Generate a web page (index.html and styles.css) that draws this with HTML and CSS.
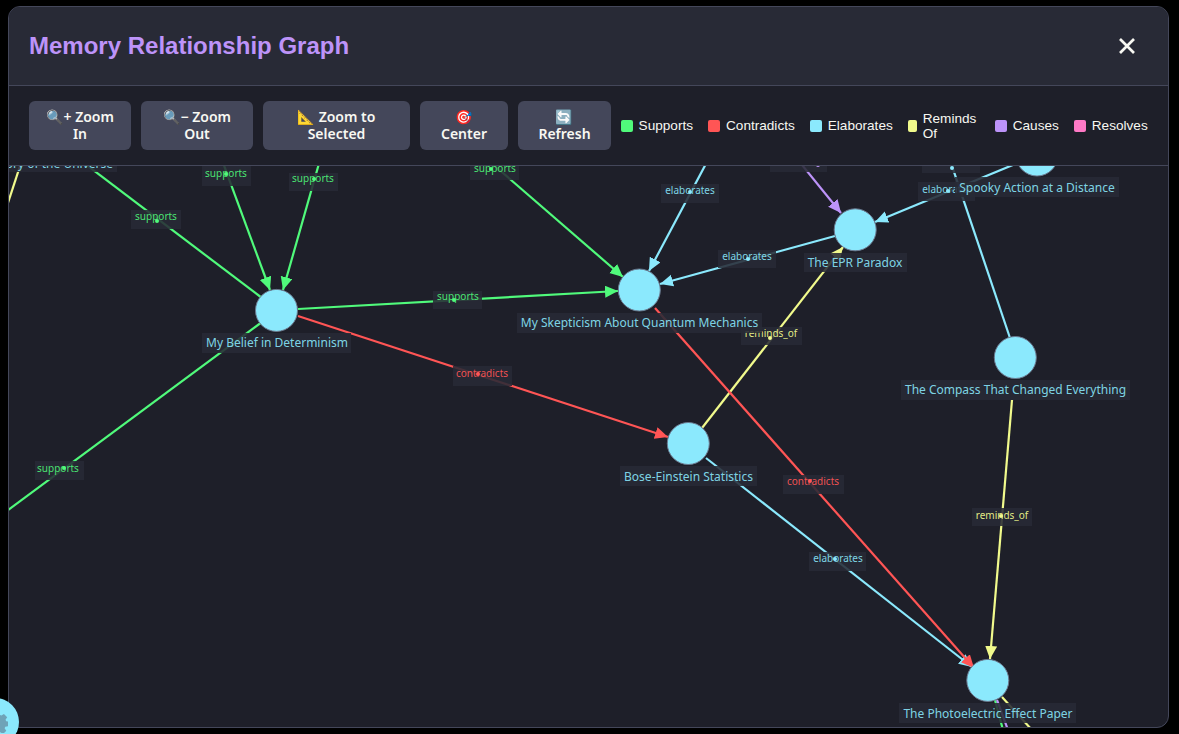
FILE: index.html
```html
<!DOCTYPE html>
<html lang="en">
<head>
<meta charset="utf-8">
<title>Memory Relationship Graph</title>
<link rel="stylesheet" href="styles.css">
</head>
<body>
<div class="modal">
  <header class="head">
    <h1 class="title">Memory Relationship Graph</h1>
    <button class="close" aria-label="Close"><svg class="close-i" viewBox="0 0 16 16"><path d="M1 1L15 15M15 1L1 15"/></svg></button>
  </header>
  <div class="toolbar">
    <button class="btn w1">🔍+ Zoom In</button>
    <button class="btn w2">🔍− Zoom Out</button>
    <button class="btn w3">📐 Zoom to Selected</button>
    <button class="btn w4">🎯 Center</button>
    <button class="btn w5">🔄 Refresh</button>
    <ul class="legend">
      <li class="item"><span class="sw c-sup"></span>Supports</li>
      <li class="item"><span class="sw c-con"></span>Contradicts</li>
      <li class="item"><span class="sw c-ela"></span>Elaborates</li>
      <li class="item rem"><span class="sw c-rem"></span><span class="rem-t">Reminds Of</span></li>
      <li class="item"><span class="sw c-cau"></span>Causes</li>
      <li class="item"><span class="sw c-res"></span>Resolves</li>
    </ul>
  </div>
  <svg class="graph" viewBox="9 166 1159 561" preserveAspectRatio="xMinYMin slice">
    <defs>
      <marker id="a-sup" markerUnits="userSpaceOnUse" markerWidth="15" markerHeight="13" refX="13" refY="6" orient="auto"><path class="f-sup" d="M0 0L13 6L0 12Z"/></marker>
      <marker id="a-con" markerUnits="userSpaceOnUse" markerWidth="15" markerHeight="13" refX="13" refY="6" orient="auto"><path class="f-con" d="M0 0L13 6L0 12Z"/></marker>
      <marker id="a-ela" markerUnits="userSpaceOnUse" markerWidth="15" markerHeight="13" refX="13" refY="6" orient="auto"><path class="f-ela" d="M0 0L13 6L0 12Z"/></marker>
      <marker id="a-rem" markerUnits="userSpaceOnUse" markerWidth="15" markerHeight="13" refX="13" refY="6" orient="auto"><path class="f-rem" d="M0 0L13 6L0 12Z"/></marker>
      <marker id="a-cau" markerUnits="userSpaceOnUse" markerWidth="15" markerHeight="13" refX="13" refY="6" orient="auto"><path class="f-cau" d="M0 0L13 6L0 12Z"/></marker>
    </defs>

    <g class="edges">
      <line class="s-rem" x1="22" y1="160" x2="5" y2="212"/>
      <line class="s-sup" x1="80" y1="160" x2="262" y2="298"/>
      <line class="s-sup" x1="222" y1="160" x2="270" y2="290" marker-end="url(#a-sup)"/>
      <line class="s-sup" x1="320" y1="160" x2="283" y2="290" marker-end="url(#a-sup)"/>
      <line class="s-sup" x1="0" y1="516" x2="262" y2="322"/>
      <line class="s-sup" x1="298" y1="309" x2="618" y2="291" marker-end="url(#a-sup)"/>
      <line class="s-con" x1="298" y1="316" x2="668" y2="437" marker-end="url(#a-con)"/>
      <line class="s-sup" x1="488" y1="160" x2="623" y2="277" marker-end="url(#a-sup)"/>
      <line class="s-ela" x1="708" y1="160" x2="649" y2="271" marker-end="url(#a-ela)"/>
      <line class="s-ela" x1="835" y1="236" x2="660" y2="284" marker-end="url(#a-ela)"/>
      <line class="s-cau" x1="798" y1="160" x2="841" y2="213" marker-end="url(#a-cau)"/>
      <line class="s-ela" x1="1037" y1="155" x2="875" y2="222" marker-end="url(#a-ela)"/>
      <line class="s-ela" x1="950" y1="160" x2="1010" y2="338"/>
      <line class="s-rem" x1="702" y1="428" x2="843" y2="247" marker-end="url(#a-rem)"/>
      <line class="s-ela" x1="706" y1="458" x2="972" y2="667" marker-end="url(#a-ela)"/>
      <line class="s-con" x1="655" y1="308" x2="974" y2="668" marker-end="url(#a-con)"/>
      <line class="s-rem" x1="1012" y1="400" x2="990" y2="659" marker-end="url(#a-rem)"/>
      <line class="s-sup" x1="995" y1="700" x2="1003" y2="730"/>
      <line class="s-cau" x1="997" y1="700" x2="1008" y2="730"/>
      <line class="s-rem" x1="1002" y1="697" x2="1032" y2="730"/>
    </g>

    <g class="elabels">
      <rect x="131" y="210" width="50" height="19"/><text class="t-sup" x="156" y="220">supports</text><circle class="f-sup" cx="157" cy="221" r="2"/>
      <rect x="202" y="165" width="49" height="21"/><text class="t-sup" x="226" y="177">supports</text><circle class="f-sup" cx="226" cy="174" r="2"/>
      <rect x="289" y="173" width="49" height="18"/><text class="t-sup" x="313" y="182">supports</text><circle class="f-sup" cx="314" cy="179" r="2"/>
      <rect x="35" y="461" width="49" height="19"/><text class="t-sup" x="58" y="472">supports</text><circle class="f-sup" cx="64" cy="468" r="2"/>
      <rect x="433" y="291" width="49" height="18"/><text class="t-sup" x="458" y="300">supports</text><circle class="f-sup" cx="454" cy="300" r="2"/>
      <rect x="453" y="366" width="59" height="20"/><text class="t-con" x="482" y="377">contradicts</text><circle class="f-con" cx="478" cy="374" r="2"/>
      <rect x="470" y="161" width="49" height="19"/><text class="t-sup" x="495" y="172">supports</text><circle class="f-sup" cx="491" cy="169" r="2"/>
      <rect x="661" y="184" width="58" height="19"/><text class="t-ela" x="690" y="194">elaborates</text><circle class="f-ela" cx="690" cy="192" r="2"/>
      <rect x="718" y="250" width="58" height="18"/><text class="t-ela" x="747" y="260">elaborates</text><circle class="f-ela" cx="748" cy="259" r="2"/>
      <rect x="770" y="150" width="57" height="22"/><circle class="f-cau" cx="818" cy="165" r="2"/>
      <rect x="922" y="150" width="58" height="23"/><circle class="f-ela" cx="952" cy="168" r="2"/>
      <rect x="918" y="182" width="57" height="19"/><text class="t-ela" x="947" y="193">elaborates</text><circle class="f-ela" cx="948" cy="191" r="2"/>
      <rect x="741" y="327" width="61" height="18"/><text class="t-rem" x="771" y="337">reminds_of</text><circle class="f-rem" cx="770" cy="338" r="2"/>
      <rect x="783" y="475" width="61" height="19"/><text class="t-con" x="813" y="485">contradicts</text><circle class="f-con" cx="810" cy="481" r="2"/>
      <rect x="809" y="552" width="57" height="19"/><text class="t-ela" x="838" y="562">elaborates</text><circle class="f-ela" cx="835" cy="559" r="2"/>
      <rect x="972" y="508" width="60" height="18"/><text class="t-rem" x="1002" y="519">reminds_of</text><circle class="f-rem" cx="1001" cy="516" r="2"/>
    </g>

    <g class="nodes">
      <circle cx="276.5" cy="310.4" r="21"/>
      <circle cx="639.3" cy="290" r="21"/>
      <circle cx="855.2" cy="229.8" r="21"/>
      <circle cx="1037" cy="155" r="21"/>
      <circle cx="1015.3" cy="357.5" r="21"/>
      <circle cx="688.3" cy="443.5" r="21"/>
      <circle cx="987.8" cy="680.4" r="21"/>
    </g>

    <g class="nlabels">
      <rect x="0" y="150" width="117" height="22"/><text x="49" y="168">Theory of the Universe</text>
      <rect x="202" y="333" width="149" height="20"/><text x="277" y="347">My Belief in Determinism</text>
      <rect x="517" y="313" width="245" height="20"/><text x="639.5" y="327">My Skepticism About Quantum Mechanics</text>
      <rect x="804" y="253" width="103" height="19"/><text x="855" y="267">The EPR Paradox</text>
      <rect x="955" y="177" width="164" height="20"/><text x="1037" y="192">Spooky Action at a Distance</text>
      <rect x="901" y="380" width="229" height="20"/><text x="1015.5" y="394">The Compass That Changed Everything</text>
      <rect x="620" y="466" width="137" height="20"/><text x="688.5" y="481">Bose-Einstein Statistics</text>
      <rect x="899" y="703" width="177" height="20"/><text x="988" y="718">The Photoelectric Effect Paper</text>
    </g>
  </svg>
</div>
<button class="fab" aria-label="Settings">
  <svg class="fab-i" viewBox="-12 -12 24 24"><path d="M-2.5-11h5l.6 3.2 1.7.8 2.8-1.8 3.5 3.5L9.3-2.5l.7 1.6 2 .4v5l-3 .6-.7 1.7 1.8 2.8-3.5 3.5-2.8-1.8-1.6.7-.6 3h-5l-.6-3-1.6-.7-2.8 1.8-3.5-3.5 1.8-2.8-.7-1.7-3-.6v-5l3-.6.7-1.6-1.8-2.8 3.5-3.5 2.8 1.8 1.7-.8z"/></svg>
</button>
</body>
</html>
```

FILE: styles.css
```css
* { box-sizing: border-box; }
html, body { height: 100%; }
body {
  margin: 0;
  padding: 6px 10px 6px 8px;
  background: #000;
  overflow: hidden;
}
.modal {
  height: 722px;
  display: flex;
  flex-direction: column;
  background: #1e1f29;
  border: 1px solid #44475a;
  border-radius: 12px;
  overflow: hidden;
}
.head {
  flex: 0 0 79px;
  display: flex;
  align-items: center;
  justify-content: space-between;
  padding: 0 26px 0 20px;
  background: #282a36;
  border-bottom: 1px solid #44475a;
}
.title {
  margin: 0;
  font: 700 24px "Liberation Sans", Arial, sans-serif;
  color: #bd93f9;
}
.close {
  display: flex;
  align-items: center;
  justify-content: center;
  width: 30px;
  height: 30px;
  padding: 0;
  border: 0;
  background: none;
}
.close-i { width: 16px; height: 16px; }
.close-i path { stroke: #f8f8f2; stroke-width: 2.7; fill: none; }
.toolbar {
  flex: 0 0 80px;
  display: flex;
  align-items: center;
  gap: 10px;
  padding: 0 20px;
  border-bottom: 1px solid #44475a;
}
.btn {
  flex: none;
  height: 49px;
  padding: 0 16px 2px;
  border: 0;
  border-radius: 6px;
  background: #44475a;
  color: #f8f8f2;
  font: 600 14px/17px "Noto Sans", "Noto Color Emoji", sans-serif;
  text-align: center;
}
.w1 { width: 102px; }
.w2 { width: 112px; }
.w3 { width: 147px; }
.w4 { width: 88px; }
.w5 { width: 93px; }
.legend {
  display: flex;
  align-items: center;
  gap: 15.4px;
  margin: 0;
  padding: 0;
  list-style: none;
  font: 400 13.6px/15px "Liberation Sans", Arial, sans-serif;
  color: #f8f8f2;
}
.item { display: flex; align-items: center; gap: 5.6px; white-space: nowrap; }
.rem-t { white-space: normal; width: 57px; }
.sw { flex: none; width: 12px; height: 12px; border-radius: 2px; }
.rem .sw { width: 9px; }
.c-sup { background: #50fa7b; }
.c-con { background: #ff5555; }
.c-ela { background: #8be9fd; }
.c-rem { background: #f1fa8c; }
.c-cau { background: #bd93f9; }
.c-res { background: #ff79c6; }

.graph { flex: 1; display: block; width: 100%; min-height: 0; }
.edges line { stroke-width: 2.2; fill: none; }
.s-sup { stroke: #50fa7b; }
.s-con { stroke: #ff5555; }
.s-ela { stroke: #8be9fd; }
.s-rem { stroke: #f1fa8c; }
.s-cau { stroke: #bd93f9; }
.f-sup { fill: #50fa7b; }
.f-con { fill: #ff5555; }
.f-ela { fill: #8be9fd; }
.f-rem { fill: #f1fa8c; }
.f-cau { fill: #bd93f9; }
.elabels rect, .nlabels rect { fill: #282a36; fill-opacity: 0.88; }
.elabels text {
  font: 400 10px "Noto Sans", sans-serif;
  text-anchor: middle;
}
.t-sup { fill: #50fa7b; fill-opacity: .9; }
.t-con { fill: #ff5555; fill-opacity: .95; }
.t-ela { fill: #8be9fd; fill-opacity: .9; }
.t-rem { fill: #f1fa8c; fill-opacity: .95; }
.nodes circle { fill: #8be9fd; stroke: #6b7a90; stroke-width: 1; }
.nlabels text {
  font: 400 12px "Noto Sans", sans-serif;
  text-anchor: middle;
  fill: #8be9fd;
  fill-opacity: .9;
}
.fab {
  position: absolute;
  left: -29px;
  top: 698px;
  display: block;
  width: 48px;
  height: 48px;
  padding: 0;
  border: 0;
  border-radius: 50%;
  background: #8be9fd;
}
.fab-i {
  position: absolute;
  left: 15px;
  top: 13px;
  width: 22px;
  height: 22px;
}
.fab-i path { fill: #6fa3b8; }
```
